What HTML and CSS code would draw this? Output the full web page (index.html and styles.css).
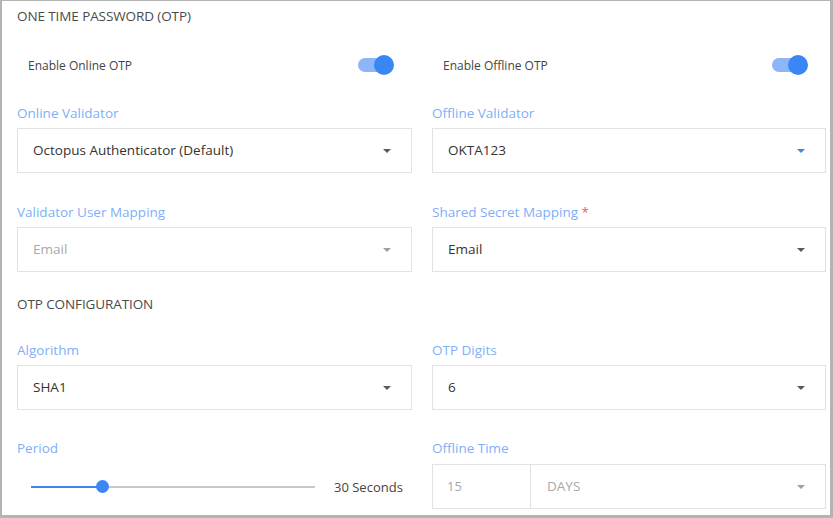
FILE: index.html
```html
<!DOCTYPE html>
<html>
<head>
<meta charset="utf-8">
<link rel="stylesheet" href="styles.css">
</head>
<body>
<div class="frame">
  <div class="section-title first">ONE TIME PASSWORD (OTP)</div>

  <div class="row toggles">
    <div class="toggle-item">
      <span class="toggle-label">Enable Online OTP</span>
      <span class="switch"><span class="knob"></span></span>
    </div>
    <div class="toggle-item">
      <span class="toggle-label">Enable Offline OTP</span>
      <span class="switch"><span class="knob"></span></span>
    </div>
  </div>

  <div class="row r1">
    <div class="field">
      <div class="label">Online Validator</div>
      <div class="select"><span class="value">Octopus Authenticator (Default)</span><span class="arrow"></span></div>
    </div>
    <div class="field">
      <div class="label">Offline Validator</div>
      <div class="select"><span class="value">OKTA123</span><span class="arrow blue"></span></div>
    </div>
  </div>

  <div class="row r2">
    <div class="field">
      <div class="label">Validator User Mapping</div>
      <div class="select"><span class="value muted">Email</span><span class="arrow light"></span></div>
    </div>
    <div class="field">
      <div class="label">Shared Secret Mapping <span class="req">*</span></div>
      <div class="select"><span class="value">Email</span><span class="arrow"></span></div>
    </div>
  </div>

  <div class="section-title second">OTP CONFIGURATION</div>

  <div class="row r3">
    <div class="field">
      <div class="label">Algorithm</div>
      <div class="select"><span class="value">SHA1</span><span class="arrow"></span></div>
    </div>
    <div class="field">
      <div class="label">OTP Digits</div>
      <div class="select"><span class="value">6</span><span class="arrow"></span></div>
    </div>
  </div>

  <div class="row r4">
    <div class="field">
      <div class="label">Period</div>
      <div class="slider-row">
        <div class="slider">
          <div class="fill"></div>
          <div class="thumb"></div>
          <div class="rest"></div>
        </div>
        <span class="slider-value">30 Seconds</span>
      </div>
    </div>
    <div class="field">
      <div class="label">Offline Time</div>
      <div class="split">
        <div class="num">15</div>
        <div class="unit"><span class="value muted">DAYS</span><span class="arrow light"></span></div>
      </div>
    </div>
  </div>
</div>
</body>
</html>
```

FILE: styles.css
```css
* { box-sizing: border-box; }
html, body { margin: 0; padding: 0; background: #fff; }
body {
  font-family: "Open Sans", "Noto Sans", sans-serif;
  font-size: 13px;
  color: #333;
}
.frame {
  width: 833px;
  height: 518px;
  border-style: solid;
  border-color: #b3b3b3;
  border-width: 1px 3px 3px 2px;
  padding: 5px 4px 0 15px;
  overflow: hidden;
}
.section-title {
  font-size: 13.5px;
  line-height: 20px;
  height: 20px;
  color: #4a4a4a;
  letter-spacing: -0.1px;
}
.section-title.second { margin-top: 22px; }
.row {
  display: grid;
  grid-template-columns: 395px 394px;
  column-gap: 20px;
}
.toggles { margin-top: 29px; height: 20px; }
.toggle-item {
  display: flex;
  align-items: center;
  justify-content: space-between;
  padding-left: 11px;
  padding-right: 18px;
  height: 20px;
}
.toggle-label { font-size: 12px; color: #444; }
.switch {
  position: relative;
  width: 36px;
  height: 20px;
  display: inline-block;
}
.switch::before {
  content: "";
  position: absolute;
  left: 0;
  top: 3px;
  width: 32px;
  height: 14px;
  border-radius: 7px;
  background: #8cb6f7;
}
.knob {
  position: absolute;
  right: 0;
  top: 0;
  width: 20px;
  height: 20px;
  border-radius: 50%;
  background: #3a86f4;
}
.r1 { margin-top: 28px; }
.r2 { margin-top: 29px; }
.r3 { margin-top: 26px; }
.r4 { margin-top: 28px; }
.label {
  line-height: 20px;
  height: 20px;
  color: #7eaff7;
  font-size: 13.5px;
}
.req { color: #ee5a6c; }
.select {
  margin-top: 5px;
  height: 45px;
  border: 1px solid #e2e2e2;
  display: flex;
  align-items: center;
  justify-content: space-between;
  padding: 0 20px 2px 15px;
}
.value { color: #333; font-size: 13.5px; }
.value.muted { color: #a8a8a8; }
.arrow {
  width: 0;
  height: 0;
  margin-top: 2px;
  border-left: 4.5px solid transparent;
  border-right: 4.5px solid transparent;
  border-top: 4.5px solid #5a5a5a;
}
.arrow.blue { border-top-color: #3a86f4; }
.arrow.light { border-top-color: #a0a0a0; }
.slider-row {
  display: flex;
  align-items: center;
  margin-top: 6px;
  height: 45px;
  padding-left: 14px;
}
.slider {
  position: relative;
  width: 284px;
  height: 13px;
  display: flex;
  align-items: center;
}
.fill { width: 71px; height: 2px; background: #3a86f4; }
.rest { flex: 1; height: 2px; background: #c8c8c8; }
.thumb {
  width: 13px;
  height: 13px;
  border-radius: 50%;
  background: #3a86f4;
  margin: 0 -6px;
  position: relative;
  z-index: 1;
}
.slider-value { margin-left: 19px; color: #444; font-size: 13px; }
.split {
  margin-top: 6px;
  height: 45px;
  border: 1px solid #e2e2e2;
  display: flex;
}
.num {
  width: 98px;
  border-right: 1px solid #e2e2e2;
  display: flex;
  align-items: center;
  padding-left: 14px;
  padding-bottom: 1px;
  color: #a8a8a8;
}
.unit {
  flex: 1;
  display: flex;
  align-items: center;
  justify-content: space-between;
  padding: 0 20px 1px 16px;
}
```
